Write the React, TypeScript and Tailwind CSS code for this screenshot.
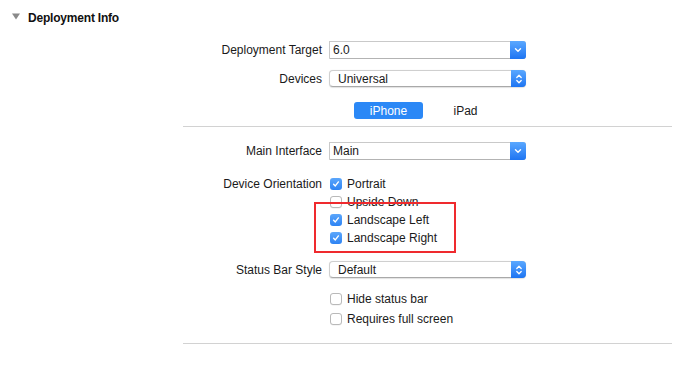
import React from "react";

const font = { fontFamily: '"Helvetica Neue", "Liberation Sans", Arial, sans-serif' };

function DownChevron() {
  return (
    <svg width="8" height="6" viewBox="0 0 8 6">
      <path d="M1.5 1.8 L4 4.2 L6.5 1.8" fill="none" stroke="white" strokeWidth="1.4" strokeLinecap="round" strokeLinejoin="round" />
    </svg>
  );
}

function UpDownChevron() {
  return (
    <svg width="8" height="12" viewBox="0 0 8 12">
      <path d="M1.8 4.5 L4 2.3 L6.2 4.5" fill="none" stroke="white" strokeWidth="1.3" strokeLinecap="round" strokeLinejoin="round" />
      <path d="M1.8 7.5 L4 9.7 L6.2 7.5" fill="none" stroke="white" strokeWidth="1.3" strokeLinecap="round" strokeLinejoin="round" />
    </svg>
  );
}

function ComboBox({ value }: { value: string }) {
  return (
    <div className="flex h-[18px] w-[197px] border border-[#c9c9c9] border-b-[#b3b3b3] bg-white rounded-r-[3px]">
      <div className="flex-1 flex items-center pl-[3px] text-[12px] text-[#1a1a1a]">{value}</div>
      <div className="w-[16px] -my-px -mr-px flex items-center justify-center rounded-r-[3px] bg-gradient-to-b from-[#5aa8ff] to-[#1c74f2]">
        <DownChevron />
      </div>
    </div>
  );
}

function PopUp({ value }: { value: string }) {
  return (
    <div className="flex h-[17px] w-[197px] rounded-[4px] border border-[#cfcfcf] border-b-[#a9a9a9] bg-white shadow-[0_0.5px_1px_rgba(0,0,0,0.12)]">
      <div className="flex-1 flex items-center pl-[8px] text-[12px] text-[#1a1a1a]">{value}</div>
      <div className="w-[15px] -my-px -mr-px flex items-center justify-center rounded-r-[4px] bg-gradient-to-b from-[#5aa8ff] to-[#1c74f2]">
        <UpDownChevron />
      </div>
    </div>
  );
}

function Check({ checked, label, h = "h-[18px]" }: { checked: boolean; label: string; h?: string }) {
  return (
    <div className={`flex items-center ${h}`}>
      {checked ? (
        <div className="w-[12px] h-[12px] rounded-[3px] bg-gradient-to-b from-[#5ba6fb] to-[#2d83f3] flex items-center justify-center">
          <svg width="8" height="8" viewBox="0 0 8 8">
            <path d="M1.6 4.2 L3.3 5.9 L6.4 1.9" fill="none" stroke="white" strokeWidth="1.4" strokeLinecap="round" strokeLinejoin="round" />
          </svg>
        </div>
      ) : (
        <div className="w-[12px] h-[12px] rounded-[3px] bg-white border border-[#b9b9b9] shadow-[0_0.5px_0.5px_rgba(0,0,0,0.08)]" />
      )}
      <span className="ml-[5px] text-[12px] text-[#1a1a1a]">{label}</span>
    </div>
  );
}

function Row({ label, children, className = "" }: { label: string; children: React.ReactNode; className?: string }) {
  return (
    <div className={`flex items-center ${className}`}>
      <div className="w-[139px] text-right text-[12px] text-[#1a1a1a]">{label}</div>
      <div className="ml-[7px]">{children}</div>
    </div>
  );
}

export default function App() {
  return (
    <div className="relative w-[688px] h-[382px] bg-white overflow-hidden" style={font}>
      <div className="h-[32px] flex items-start pt-[9px] pl-[12px]">
        <svg width="8" height="7" viewBox="0 0 8 7" className="mt-[4px]">
          <path d="M0 0.5 H8 L4 6.5 Z" fill="#8a8a8a" />
        </svg>
        <span className="ml-[8px] text-[12px] font-bold text-[#111] tracking-[-0.2px]">Deployment Info</span>
      </div>

      <div className="ml-[183px] w-[489px] flex flex-col">
        <Row label="Deployment Target" className="mt-[9px] h-[18px]">
          <ComboBox value="6.0" />
        </Row>
        <Row label="Devices" className="mt-[11px] h-[17px]">
          <PopUp value="Universal" />
        </Row>
        <div className="mt-[15px] h-[17px] flex pl-[171px]">
          <div className="w-[69px] h-[17px] rounded-[3px] bg-[#2b88f6] text-white text-[12px] flex items-center justify-center">iPhone</div>
          <div className="ml-[8px] w-[69px] h-[17px] text-[12px] text-[#1a1a1a] flex items-center justify-center">iPad</div>
        </div>
        <div className="mt-[7px] h-px bg-[#d2d2d2]" />

        <Row label="Main Interface" className="mt-[15px] h-[17px]">
          <ComboBox value="Main" />
        </Row>

        <div className="mt-[16px] flex">
          <div className="w-[139px] h-[18px] flex items-center justify-end text-[12px] text-[#1a1a1a]">Device Orientation</div>
          <div className="ml-[8px] flex flex-col">
            <Check checked label="Portrait" />
            <Check checked={false} label="Upside Down" />
            <Check checked label="Landscape Left" />
            <Check checked label="Landscape Right" />
          </div>
        </div>

        <Row label="Status Bar Style" className="mt-[14px] h-[17px]">
          <PopUp value="Default" />
        </Row>

        <div className="mt-[11px] flex flex-col pl-[147px]">
          <Check checked={false} label="Hide status bar" h="h-[20px]" />
          <Check checked={false} label="Requires full screen" h="h-[20px]" />
        </div>

        <div className="mt-[14px] h-px bg-[#d2d2d2]" />
      </div>

      <div className="absolute left-[314px] top-[202px] w-[142px] h-[51px] border-2 border-[#ef2a2e]" />
    </div>
  );
}
